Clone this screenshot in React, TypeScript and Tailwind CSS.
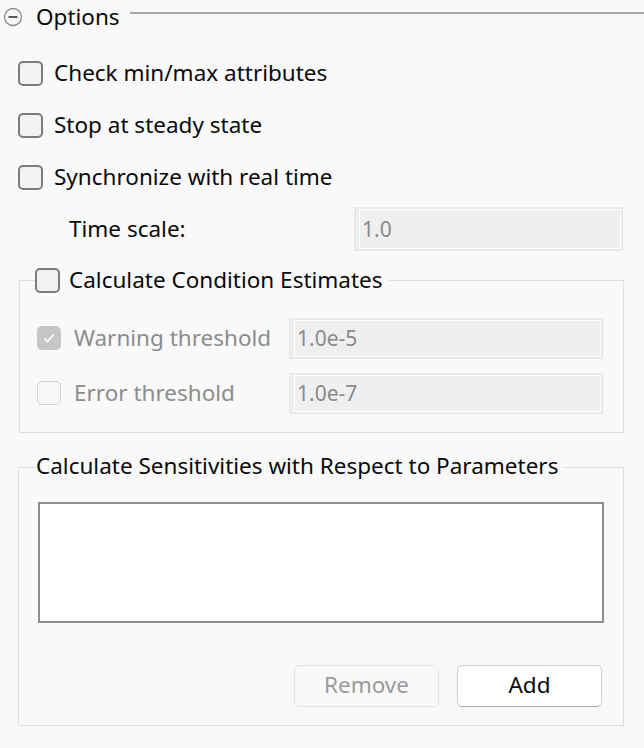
import React from "react";

const font = { fontFamily: '"Segoe UI", "Noto Sans", "Open Sans", sans-serif' };

function Box({ checked = false, disabled = false }: { checked?: boolean; disabled?: boolean }) {
  if (checked) {
    return (
      <span className="flex h-[24px] w-[24px] shrink-0 items-center justify-center rounded-[5px] bg-[#c6c6c6]">
        <svg width="14" height="14" viewBox="0 0 14 14">
          <path d="M2.5 7.5 L5.5 10.5 L11.5 3.5" fill="none" stroke="#ffffff" strokeWidth="1.6" />
        </svg>
      </span>
    );
  }
  return (
    <span
      className={
        disabled
          ? "block h-[24px] w-[24px] shrink-0 rounded-[5px] border-[1.5px] border-[#d4d4d4] bg-[#f7f7f7]"
          : "block h-[25px] w-[25px] shrink-0 rounded-[5px] border-2 border-[#7c7c7c] bg-[#f2f2f2]"
      }
    />
  );
}

function Field({ value, className }: { value: string; className: string }) {
  return (
    <div className={"flex items-center border-2 border-[#e9e9e9] bg-[#efefef] pl-[3px] text-[21px] text-[#8a8a8a] " + className}>
      <div className="flex h-full w-full items-center border border-white px-[2px]">{value}</div>
    </div>
  );
}

function CheckRow({ label }: { label: string }) {
  return (
    <div className="flex h-[52px] items-center gap-[11px] pl-[18px]">
      <Box />
      <span className="text-[22.5px] text-[#0a0a0a]">{label}</span>
    </div>
  );
}

export default function App() {
  return (
    <div className="h-[748px] w-[644px] overflow-hidden bg-[#f9f9f9] leading-none" style={font}>
      {/* header */}
      <div className="flex h-[34px] items-center">
        <svg className="ml-[3px] shrink-0" width="20" height="20" viewBox="0 0 20 20">
          <circle cx="10" cy="10" r="8.5" fill="#f6f6f6" stroke="#8c8c8c" strokeWidth="1.3" />
          <path d="M5.5 10 H14.5" stroke="#333" strokeWidth="1.6" />
        </svg>
        <span className="ml-[13px] text-[22.5px] text-[#0a0a0a]">Options</span>
        <div className="ml-[10px] mt-[-8px] h-[2px] flex-1 bg-[#a9a9a9]" />
      </div>

      <div className="mt-[13px]">
        <CheckRow label="Check min/max attributes" />
        <CheckRow label="Stop at steady state" />
        <CheckRow label="Synchronize with real time" />
      </div>

      <div className="mt-[4px] flex h-[44px] items-center">
        <span className="ml-[69px] text-[22.5px] text-[#0a0a0a]">Time scale:</span>
        <Field value="1.0" className="ml-auto mr-[21px] h-[44px] w-[269px]" />
      </div>

      {/* condition estimates */}
      <div className="ml-[19px] mt-[29px] h-[153px] w-[605px] border border-[#dedede]">
        <div className="ml-[15px] mt-[-13px] flex w-fit items-center gap-[9px] bg-[#f9f9f9] pr-[6px]">
          <Box />
          <span className="text-[22.5px] text-[#0a0a0a]">Calculate Condition Estimates</span>
        </div>
        <div className="mt-[25px] flex h-[40px] items-center pl-[17px] pr-[20px]">
          <Box checked />
          <span className="ml-[13px] text-[22.5px] text-[#8c8c8c]">Warning threshold</span>
          <Field value="1.0e-5" className="ml-auto h-[41px] w-[314px]" />
        </div>
        <div className="mt-[15px] flex h-[40px] items-center pl-[17px] pr-[20px]">
          <Box disabled />
          <span className="ml-[13px] text-[22.5px] text-[#8c8c8c]">Error threshold</span>
          <Field value="1.0e-7" className="ml-auto h-[41px] w-[314px]" />
        </div>
      </div>

      {/* sensitivities */}
      <div className="ml-[18px] mt-[34px] h-[259px] w-[606px] border border-[#dedede]">
        <div className="ml-[17px] mt-[-13px] w-fit bg-[#f9f9f9] pr-[6px] text-[22.5px] text-[#0a0a0a]">
          Calculate Sensitivities with Respect to Parameters
        </div>
        <div className="ml-[19px] mt-[24px] h-[121px] w-[566px] border-2 border-[#8e8e8e] bg-white" />
        <div className="mt-[42px] flex justify-end gap-[18px] pr-[21px]">
          <button
            type="button"
            disabled
            className="h-[42px] w-[145px] rounded-[5px] border border-[#e4e4e4] bg-[#f9f9f9] text-[22.5px] text-[#9a9a9a]"
          >
            Remove
          </button>
          <button
            type="button"
            className="h-[42px] w-[145px] rounded-[5px] border border-[#cfcfcf] border-b-[#a9a9a9] bg-white text-[22.5px] text-[#0a0a0a]"
          >
            Add
          </button>
        </div>
      </div>
    </div>
  );
}
